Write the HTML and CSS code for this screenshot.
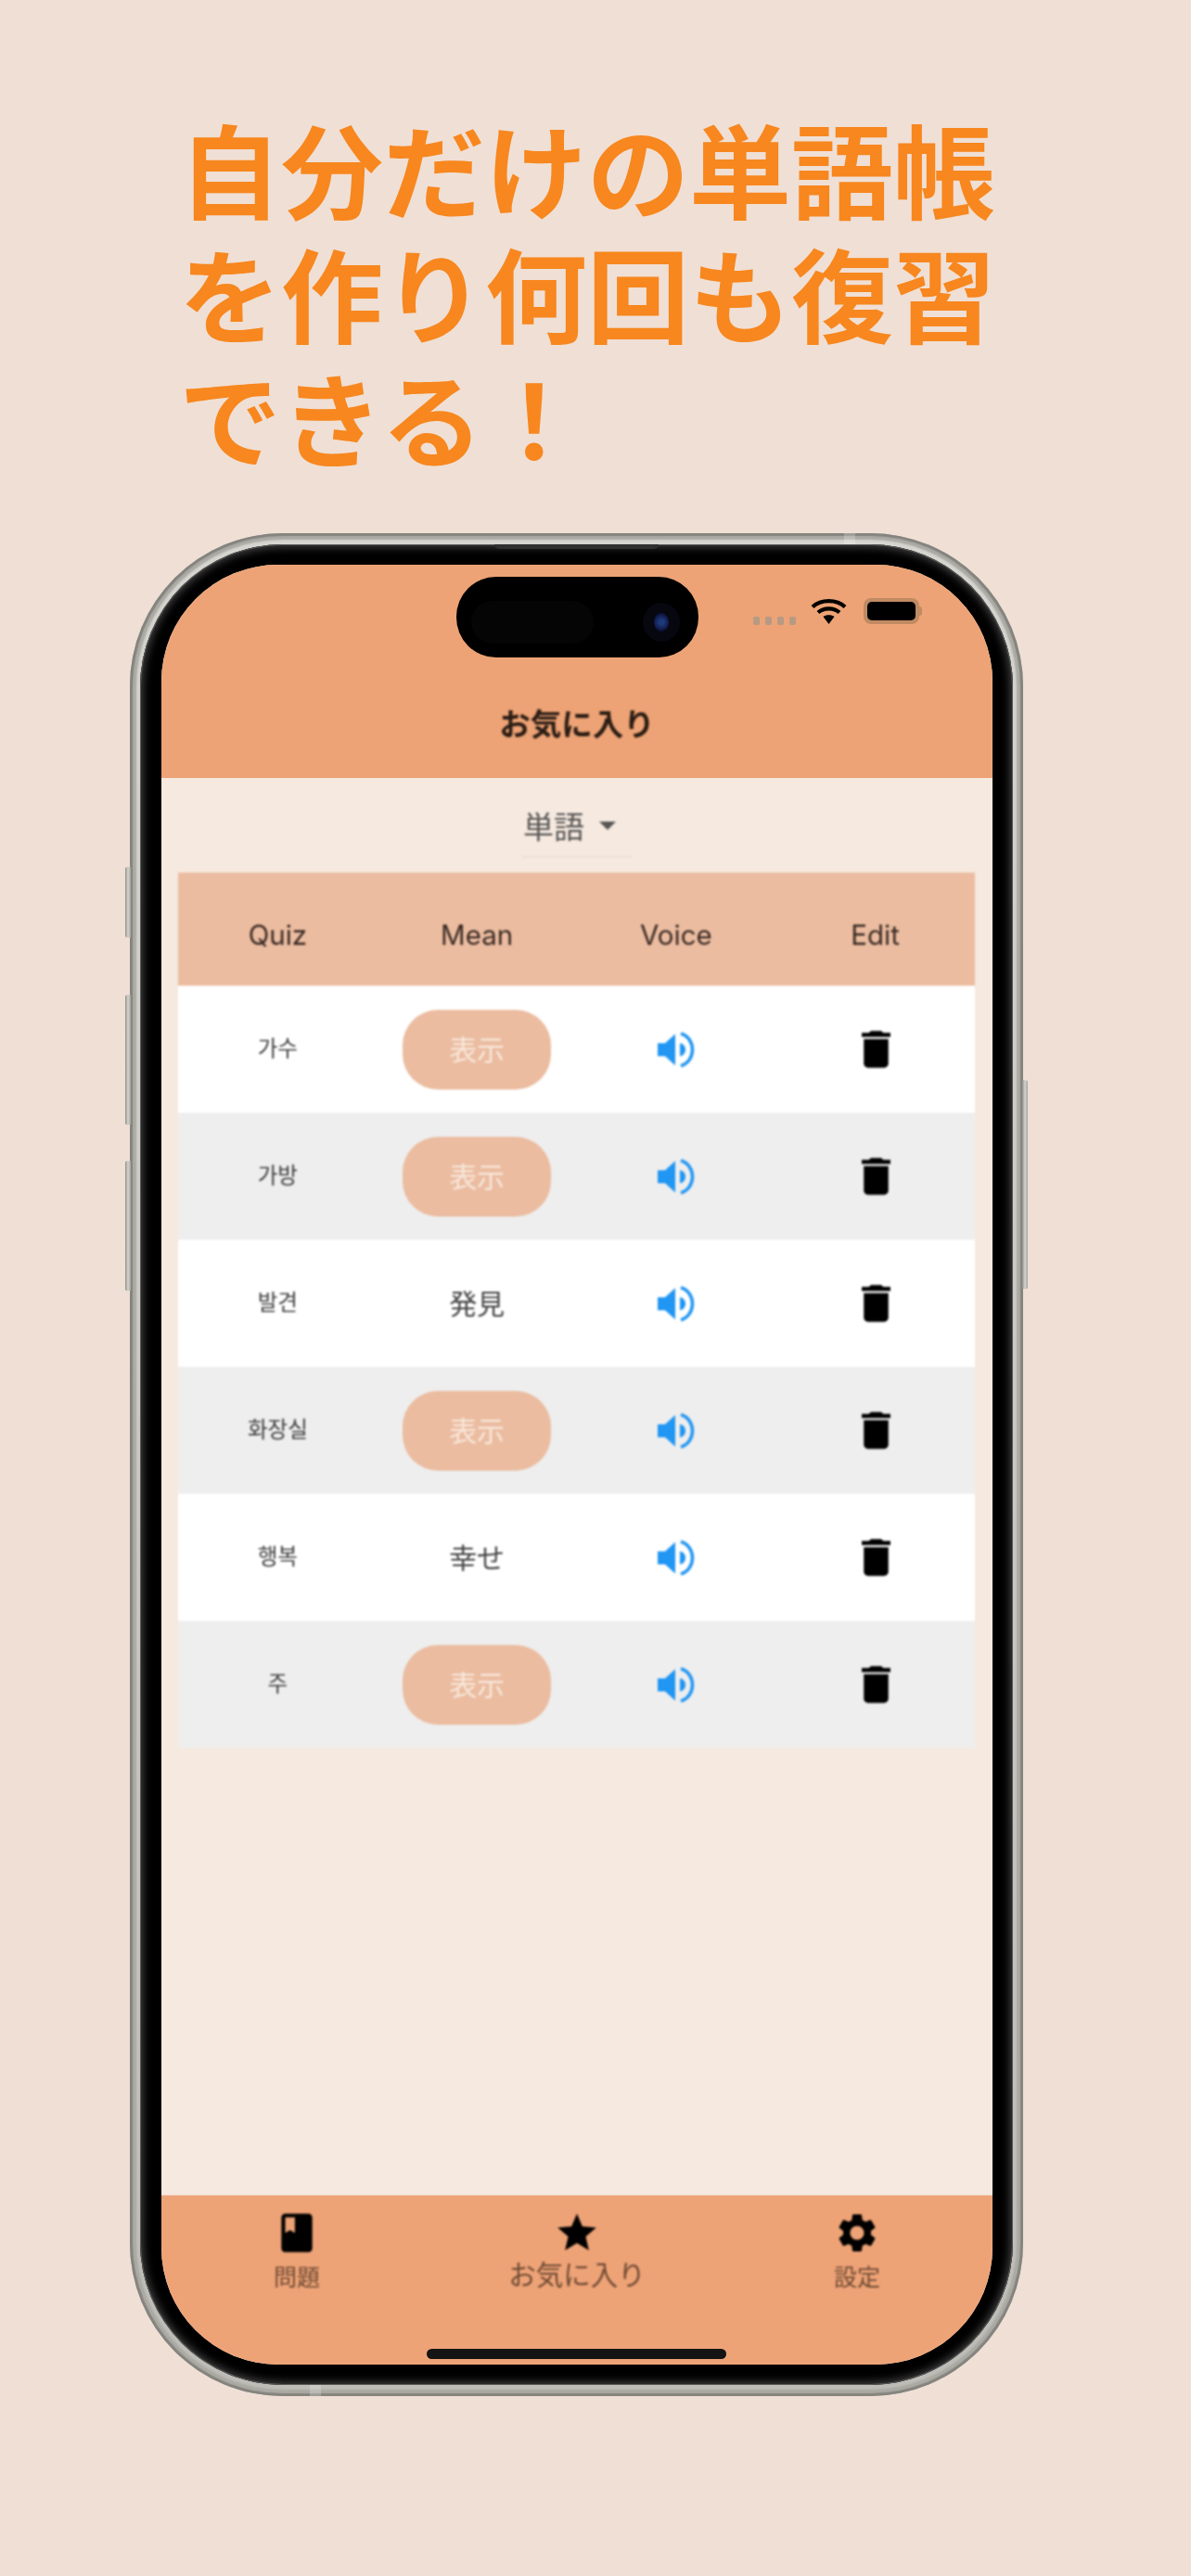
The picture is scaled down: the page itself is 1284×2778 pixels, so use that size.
FILE: index.html
```html
<!DOCTYPE html>
<html lang="ja">
<head>
<meta charset="utf-8">
<title>お気に入り</title>
<link rel="stylesheet" href="styles.css">
</head>
<body>
<h1 class="hero">自分だけの単語帳<br>を作り何回も復習<br>できる！</h1>
<div class="phone">
  <span class="side-btn side-btn-mute"></span>
  <span class="side-btn side-btn-up"></span>
  <span class="side-btn side-btn-down"></span>
  <span class="side-btn side-btn-power"></span>
  <span class="band band-top"></span>
  <span class="band band-bottom"></span>
  <div class="bezel">
    <span class="earpiece"></span>
    <div class="screen">
      <div class="island">
        <span class="island-sensor"></span>
        <span class="island-camera"><span class="island-lens"></span></span>
      </div>
      <div class="status">
        <span class="cell"><i></i><i></i><i></i><i></i></span>
        <svg class="wifi" viewBox="0 0 39 30" aria-hidden="true">
          <path d="M2 11.5C11 3 28 3 37 11.5M8 17.500C14 12 25 12 31 17.500" fill="none" stroke="#000" stroke-width="4.2"/>
          <path d="M13.500 22C16.500 19.500 22.500 19.500 25.500 22L19.500 30Z" fill="#000"/>
        </svg>
        <span class="battery"><span class="battery-fill"></span></span>
      </div>
      <header class="appbar"><span class="appbar-title">お気に入り</span></header>
      <main class="content">
        <div class="dropdown">
          <span class="dropdown-label">単語</span>
          <span class="dropdown-arrow"></span>
        </div>
        <div class="table">
          <div class="row row-head">
            <div class="cell-box">Quiz</div>
            <div class="cell-box">Mean</div>
            <div class="cell-box">Voice</div>
            <div class="cell-box">Edit</div>
          </div>
          <div class="row">
            <div class="cell-box quiz">가수</div>
            <div class="cell-box"><span class="show-btn">表示</span></div>
            <div class="cell-box"><svg class="voice" viewBox="0 0 40 38" aria-hidden="true"><path d="M0 12H8L19 2V36L8 26H0Z"/><path d="M24 12C27 12 30 15 30 19S27 26 24 26Z"/><path class="voice-arc" d="M25 1.500C33 4 37.500 11 37.500 19S33 34 25 36.500"/></svg></div>
            <div class="cell-box"><svg class="trash" viewBox="0 0 24 24" aria-hidden="true"><path d="M6 19c0 1.100.9 2 2 2h8c1.100 0 2-.9 2-2V7H6v12zM19 4h-3.500l-1-1h-5l-1 1H5v2h14V4z"/></svg></div>
          </div>
          <div class="row row-alt">
            <div class="cell-box quiz">가방</div>
            <div class="cell-box"><span class="show-btn">表示</span></div>
            <div class="cell-box"><svg class="voice" viewBox="0 0 40 38" aria-hidden="true"><path d="M0 12H8L19 2V36L8 26H0Z"/><path d="M24 12C27 12 30 15 30 19S27 26 24 26Z"/><path class="voice-arc" d="M25 1.500C33 4 37.500 11 37.500 19S33 34 25 36.500"/></svg></div>
            <div class="cell-box"><svg class="trash" viewBox="0 0 24 24" aria-hidden="true"><path d="M6 19c0 1.100.9 2 2 2h8c1.100 0 2-.9 2-2V7H6v12zM19 4h-3.500l-1-1h-5l-1 1H5v2h14V4z"/></svg></div>
          </div>
          <div class="row">
            <div class="cell-box quiz">발견</div>
            <div class="cell-box mean">発見</div>
            <div class="cell-box"><svg class="voice" viewBox="0 0 40 38" aria-hidden="true"><path d="M0 12H8L19 2V36L8 26H0Z"/><path d="M24 12C27 12 30 15 30 19S27 26 24 26Z"/><path class="voice-arc" d="M25 1.500C33 4 37.500 11 37.500 19S33 34 25 36.500"/></svg></div>
            <div class="cell-box"><svg class="trash" viewBox="0 0 24 24" aria-hidden="true"><path d="M6 19c0 1.100.9 2 2 2h8c1.100 0 2-.9 2-2V7H6v12zM19 4h-3.500l-1-1h-5l-1 1H5v2h14V4z"/></svg></div>
          </div>
          <div class="row row-alt">
            <div class="cell-box quiz">화장실</div>
            <div class="cell-box"><span class="show-btn">表示</span></div>
            <div class="cell-box"><svg class="voice" viewBox="0 0 40 38" aria-hidden="true"><path d="M0 12H8L19 2V36L8 26H0Z"/><path d="M24 12C27 12 30 15 30 19S27 26 24 26Z"/><path class="voice-arc" d="M25 1.500C33 4 37.500 11 37.500 19S33 34 25 36.500"/></svg></div>
            <div class="cell-box"><svg class="trash" viewBox="0 0 24 24" aria-hidden="true"><path d="M6 19c0 1.100.9 2 2 2h8c1.100 0 2-.9 2-2V7H6v12zM19 4h-3.500l-1-1h-5l-1 1H5v2h14V4z"/></svg></div>
          </div>
          <div class="row">
            <div class="cell-box quiz">행복</div>
            <div class="cell-box mean">幸せ</div>
            <div class="cell-box"><svg class="voice" viewBox="0 0 40 38" aria-hidden="true"><path d="M0 12H8L19 2V36L8 26H0Z"/><path d="M24 12C27 12 30 15 30 19S27 26 24 26Z"/><path class="voice-arc" d="M25 1.500C33 4 37.500 11 37.500 19S33 34 25 36.500"/></svg></div>
            <div class="cell-box"><svg class="trash" viewBox="0 0 24 24" aria-hidden="true"><path d="M6 19c0 1.100.9 2 2 2h8c1.100 0 2-.9 2-2V7H6v12zM19 4h-3.500l-1-1h-5l-1 1H5v2h14V4z"/></svg></div>
          </div>
          <div class="row row-alt">
            <div class="cell-box quiz">주</div>
            <div class="cell-box"><span class="show-btn">表示</span></div>
            <div class="cell-box"><svg class="voice" viewBox="0 0 40 38" aria-hidden="true"><path d="M0 12H8L19 2V36L8 26H0Z"/><path d="M24 12C27 12 30 15 30 19S27 26 24 26Z"/><path class="voice-arc" d="M25 1.500C33 4 37.500 11 37.500 19S33 34 25 36.500"/></svg></div>
            <div class="cell-box"><svg class="trash" viewBox="0 0 24 24" aria-hidden="true"><path d="M6 19c0 1.100.9 2 2 2h8c1.100 0 2-.9 2-2V7H6v12zM19 4h-3.500l-1-1h-5l-1 1H5v2h14V4z"/></svg></div>
          </div>
        </div>
      </main>
      <nav class="nav">
        <div class="nav-item">
          <svg class="nav-icon" viewBox="0 0 24 24" aria-hidden="true"><path d="M18 2H6c-1.100 0-2 .9-2 2v16c0 1.100.9 2 2 2h12c1.100 0 2-.9 2-2V4c0-1.100-.9-2-2-2zM6 4h5v8l-2.500-1.500L6 12V4z"/></svg>
          <span class="nav-label">問題</span>
        </div>
        <div class="nav-item nav-item-active">
          <svg class="nav-icon" viewBox="0 0 24 24" aria-hidden="true"><path d="M12 17.270L18.180 21l-1.640-7.030L22 9.240l-7.190-.61L12 2 9.190 8.630 2 9.240l5.460 4.730L5.820 21z"/></svg>
          <span class="nav-label">お気に入り</span>
        </div>
        <div class="nav-item">
          <svg class="nav-icon" viewBox="0 0 24 24" aria-hidden="true"><path d="M19.140,12.940c0.040-0.300,0.060-0.610,0.060-0.940c0-0.320-0.020-0.640-0.070-0.940l2.030-1.580c0.180-0.140,0.230-0.410,0.120-0.610l-1.920-3.320c-0.120-0.220-0.370-0.290-0.590-0.220l-2.390,0.960c-0.500-0.380-1.030-0.700-1.620-0.940L14.400,2.810c-0.040-0.240-0.240-0.410-0.480-0.410h-3.840c-0.240,0-0.430,0.170-0.470,0.410L9.250,5.350C8.660,5.590,8.120,5.920,7.630,6.290L5.240,5.330c-0.220-0.080-0.470,0-0.590,0.220L2.740,8.870C2.620,9.080,2.660,9.340,2.860,9.480l2.030,1.580C4.840,11.360,4.800,11.690,4.800,12s0.020,0.640,0.070,0.940l-2.030,1.580c-0.180,0.140-0.230,0.410-0.120,0.610l1.920,3.320c0.120,0.220,0.370,0.290,0.590,0.220l2.390-0.960c0.500,0.380,1.030,0.700,1.620,0.940l0.360,2.540c0.050,0.240,0.240,0.410,0.480,0.410h3.840c0.240,0,0.440-0.170,0.470-0.410l0.360-2.540c0.590-0.240,1.130-0.560,1.620-0.940l2.390,0.960c0.220,0.080,0.470,0,0.590-0.220l1.920-3.320c0.120-0.220,0.070-0.470-0.120-0.610L19.140,12.940z M12,15.600c-1.980,0-3.600-1.620-3.600-3.600s1.620-3.600,3.600-3.600s3.600,1.620,3.600,3.600S13.980,15.600,12,15.600z"/></svg>
          <span class="nav-label">設定</span>
        </div>
      </nav>
      <span class="home-bar"></span>
    </div>
  </div>
</div>
</body>
</html>
```

FILE: styles.css
```css
* { box-sizing: border-box; }
html, body { margin: 0; padding: 0; }
body {
  width: 1284px;
  height: 2778px;
  overflow: hidden;
  background: #f0dfd5;
  font-family: "Noto Sans CJK JP", "Noto Sans", sans-serif;
}
.hero {
  margin: 0;
  padding: 113px 0 60px 193px;
  font-size: 110px;
  line-height: 134px;
  font-weight: 700;
  color: #f7871e;
  white-space: nowrap;
}
.phone {
  position: relative;
  width: 963px;
  height: 2009px;
  margin-left: 140px;
  padding: 12px 11px;
  border-radius: 165px;
  background: linear-gradient(180deg, #d6d5cf, #bdbcb6);
  box-shadow: inset 0 0 1px 3px #85847e, inset 0 0 2px 7px #aaa9a3;
}
.side-btn {
  position: absolute;
  left: -5px;
  width: 6px;
  border-radius: 2px 0 0 2px;
  background: linear-gradient(90deg, #8f8e88, #d5d4ce 50%, #a5a49e);
}
.side-btn-mute { top: 360px; height: 76px; }
.side-btn-up { top: 498px; height: 140px; }
.side-btn-down { top: 677px; height: 140px; }
.side-btn-power { left: auto; right: -5px; top: 590px; height: 225px; border-radius: 0 2px 2px 0; }
.band { position: absolute; width: 12px; height: 12px; background: rgba(255, 255, 255, .22); }
.band-top { top: 0; left: 770px; }
.band-bottom { bottom: 0; left: 194px; }
.bezel {
  position: relative;
  width: 941px;
  height: 1985px;
  padding: 22px 22px 22px 23px;
  border-radius: 154px;
  background: #000;
  box-shadow: inset 0 0 0 1px #5a5a5a, inset 0 0 10px 3px #444;
}
.earpiece {
  position: absolute;
  top: 0;
  left: 382px;
  width: 177px;
  height: 5px;
  border-radius: 0 0 5px 5px;
  background: #303030;
}
.screen {
  position: relative;
  display: flex;
  flex-direction: column;
  width: 896px;
  height: 1941px;
  overflow: hidden;
  border-radius: 126px;
  background: #f6e9df;
}
.island {
  position: absolute;
  top: 13px;
  left: 318px;
  width: 261px;
  height: 87px;
  border-radius: 43px;
  background: #000;
}
.island-sensor {
  position: absolute;
  top: 26px;
  left: 16px;
  width: 132px;
  height: 46px;
  border-radius: 23px;
  background: #050505;
}
.island-camera {
  position: absolute;
  top: 28px;
  left: 201px;
  display: flex;
  align-items: center;
  justify-content: center;
  width: 40px;
  height: 42px;
  border-radius: 50%;
  background: #07070f;
}
.island-lens {
  width: 16px;
  height: 20px;
  border-radius: 50%;
  background: radial-gradient(circle, #1c3a7a 20%, #0e1240 70%);
}
.status {
  position: absolute;
  top: 34px;
  left: 638px;
  display: flex;
  align-items: flex-start;
  filter: blur(.6px);
}
.cell {
  display: flex;
  gap: 6px;
  margin-top: 22px;
  margin-right: 16px;
}
.cell i {
  width: 7px;
  height: 9px;
  border-radius: 2px;
  background: #b69a84;
}
.wifi { width: 39px; height: 30px; margin-right: 18px; }
.battery {
  position: relative;
  width: 60px;
  height: 28px;
  margin-top: 2px;
  padding: 4px;
  border-radius: 8px;
  background: #c08a63;
}
.battery::after {
  content: "";
  position: absolute;
  top: 9px;
  right: -3px;
  width: 3px;
  height: 10px;
  border-radius: 0 3px 3px 0;
  background: #c08a63;
}
.battery-fill {
  display: block;
  width: 100%;
  height: 100%;
  border-radius: 5px;
  background: #000;
}
.appbar {
  display: flex;
  align-items: flex-end;
  justify-content: center;
  height: 230px;
  padding-bottom: 36px;
  background: #eda375;
}
.appbar-title {
  font-size: 33.500px;
  line-height: 48px;
  font-weight: 700;
  color: #2a1c14;
  filter: blur(.8px);
}
.content {
  flex: 1;
  display: flex;
  flex-direction: column;
  padding: 0 19px 0 18px;
}
.dropdown {
  display: flex;
  align-items: center;
  align-self: center;
  width: 118px;
  margin-bottom: 16px;
  margin-left: 1px;
  padding: 30px 0 12px 1px;
  border-bottom: 2px solid #ebe1d8;
  filter: blur(.8px);
}
.dropdown-label {
  font-size: 33px;
  line-height: 42px;
  color: #555;
}
.dropdown-arrow {
  width: 0;
  height: 0;
  margin-left: 16px;
  border-left: 9px solid transparent;
  border-right: 9px solid transparent;
  border-top: 9px solid #555;
}
.table { display: flex; flex-direction: column; filter: blur(.8px); }
.row {
  display: grid;
  grid-template-columns: repeat(4, 1fr);
  height: 137px;
  background: #fff;
}
.row-alt { background: #eee; }
.row-head {
  height: 122px;
  padding-top: 12px;
  background: #ebbca0;
  font-family: Inter, Roboto, sans-serif;
  font-size: 29.500px;
  color: #3a2a24;
}
.cell-box {
  display: flex;
  align-items: center;
  justify-content: center;
}
.quiz {
  padding-bottom: 5px;
  font-family: "Noto Sans CJK KR", sans-serif;
  font-size: 23.500px;
  color: #3c3c3c;
}
.mean { padding-bottom: 4px; font-size: 30px; color: #444; }
.show-btn {
  display: flex;
  align-items: center;
  justify-content: center;
  width: 160px;
  height: 86px;
  padding-bottom: 4px;
  border-radius: 38px;
  background: #ebbca0;
  font-size: 30px;
  color: #f8e8dc;
}
.voice { width: 40px; height: 38px; fill: #2196f3; }
.voice-arc { fill: none; stroke: #2196f3; stroke-width: 3.500; }
.trash { width: 53px; height: 53px; margin-left: 2px; fill: #000; }
.nav {
  display: grid;
  grid-template-columns: repeat(3, 302px);
  justify-content: center;
  height: 183px;
  padding-top: 15px;
  background: #eea377;
  border-top: 1px solid #ecc3a6;
}
.nav-item {
  display: flex;
  flex-direction: column;
  align-items: center;
  filter: blur(.8px);
}
.nav-icon { width: 50px; height: 50px; fill: #000; }
.nav-label {
  margin-top: 6px;
  font-size: 25px;
  line-height: 30px;
  color: #6e4a33;
}
.nav-item-active .nav-label { margin-top: 3px; font-size: 29.500px; }
.home-bar {
  position: absolute;
  left: 286px;
  bottom: 6px;
  width: 323px;
  height: 11px;
  border-radius: 6px;
  background: #141414;
}
```
